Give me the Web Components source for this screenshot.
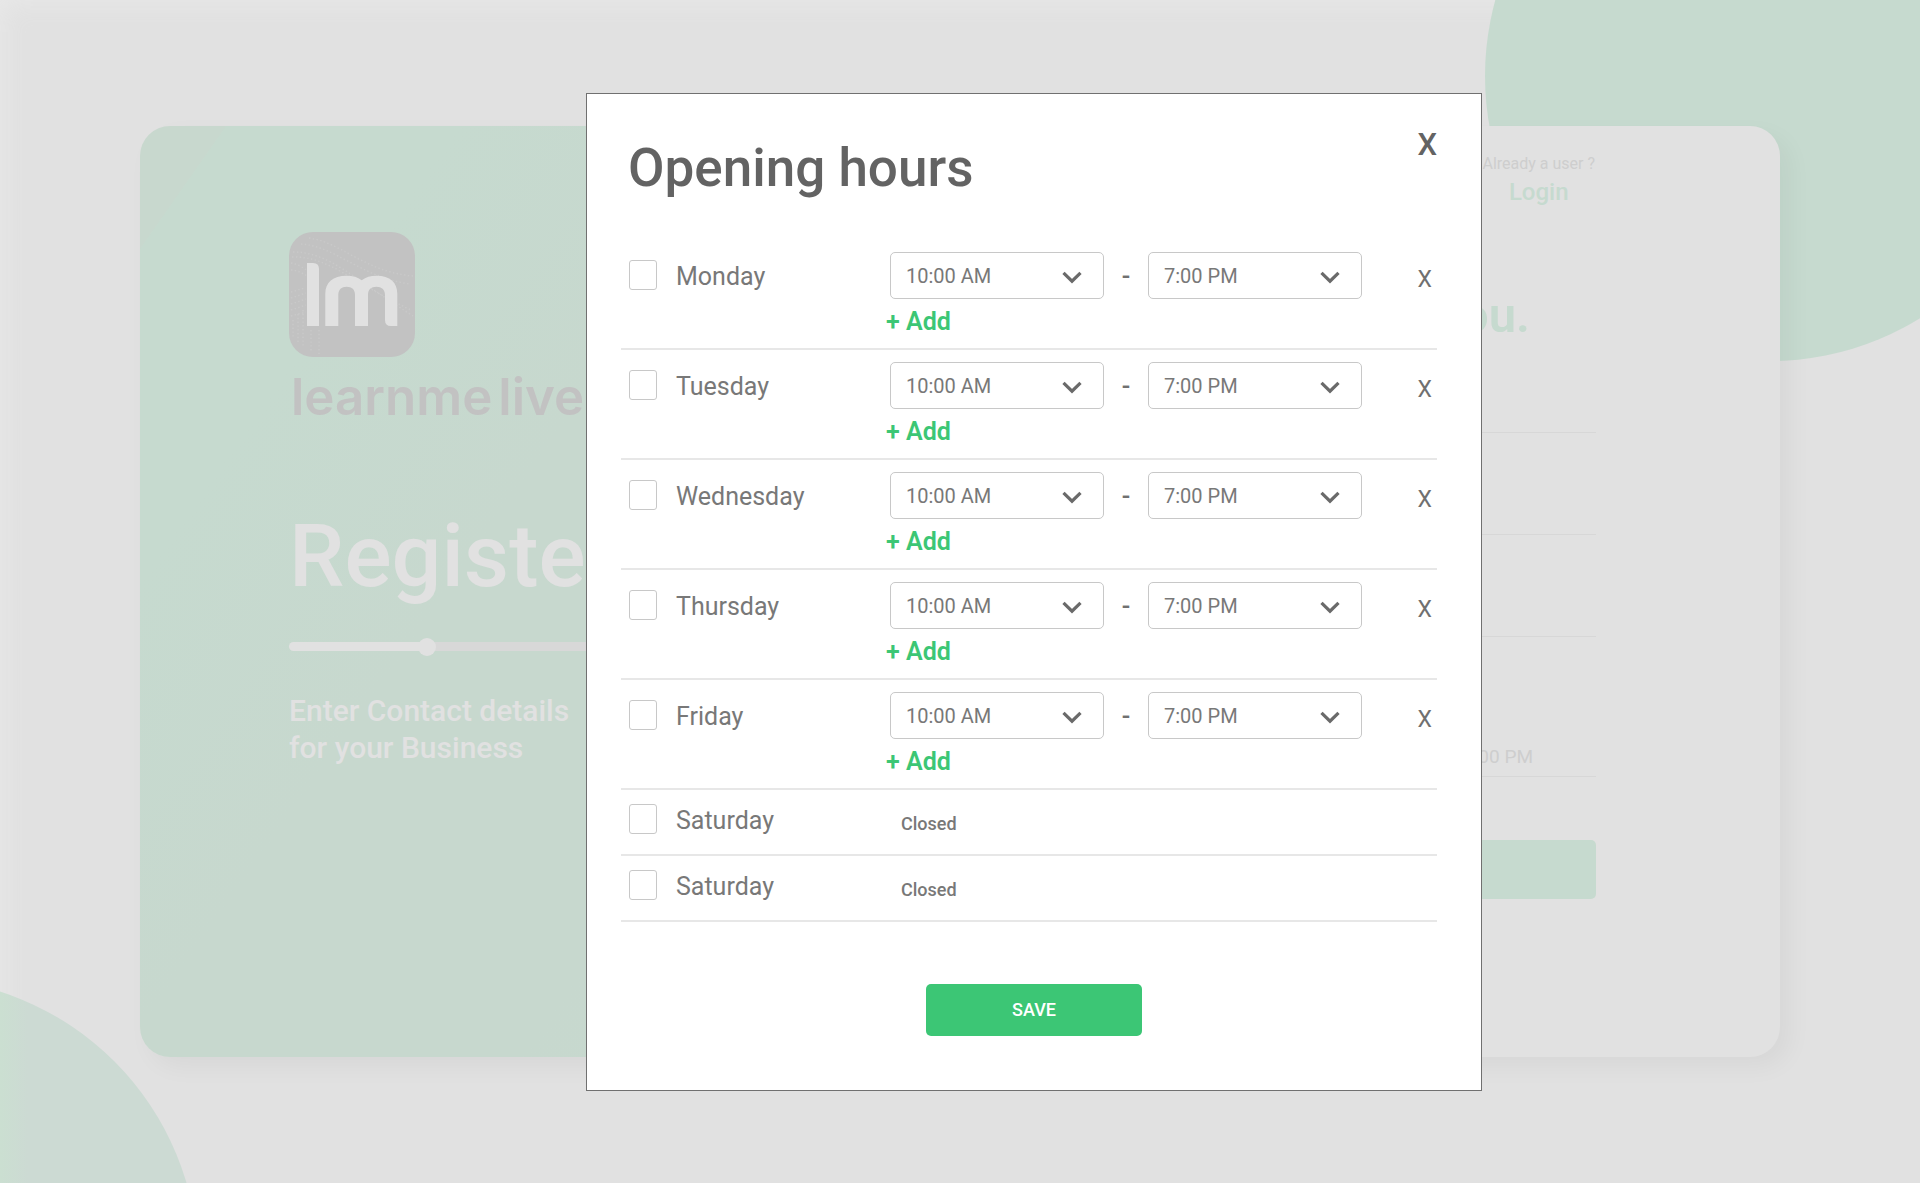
<!DOCTYPE html>
<html lang="en">
<head>
<meta charset="utf-8">
<title>Opening hours</title>
<style>
  body { margin: 0; font-family: Roboto, "Liberation Sans", sans-serif; background: #e0e0e0; }
</style>
</head>
<body>
<app-shell>
  <register-card></register-card>
  <hours-dialog slot="dialog" heading="Opening hours">
    <day-row day="Monday" open></day-row>
    <day-row day="Tuesday" open></day-row>
    <day-row day="Wednesday" open></day-row>
    <day-row day="Thursday" open></day-row>
    <day-row day="Friday" open></day-row>
    <day-row day="Saturday"></day-row>
    <day-row day="Saturday"></day-row>
  </hours-dialog>
</app-shell>

<script>
const base = `:host, *, *::before, *::after { box-sizing: border-box; }
  button, input, select { font: inherit; color: inherit; margin: 0; }
  h1, h2, p { margin: 0; }`;

function define(name, render) {
  customElements.define(name, class extends HTMLElement {
    connectedCallback() {
      if (this.shadowRoot) return;
      this.attachShadow({ mode: 'open' }).innerHTML = render(this);
    }
  });
}

define('app-shell', () => `
<style>${base}
  :host { display: block; position: relative; min-height: 100vh; overflow: hidden; background: #e1e1e1;
    box-shadow: inset 14px 14px 24px -10px #e8e8e8; }
  .blob { position: absolute; width: 570px; height: 570px; border-radius: 50%; }
  .top { right: -135px; top: -209px; background: #c6dacf; }
  .bottom { left: -372px; bottom: -365px; background: linear-gradient(to right, #cbdfd1 372px, #ccdad3 400px); }
  main { position: relative; padding: 126px 140px; }
  .overlay { position: absolute; inset: 0; display: grid; align-items: start;
    grid-template-columns: 586fr 896px 438fr; padding-top: 93px; }
  slot[name=dialog]::slotted(*) { grid-column: 2; }
</style>
<div class="blob top"></div><div class="blob bottom"></div>
<main><slot></slot></main>
<div class="overlay"><slot name="dialog"></slot></div>`);

define('brand-mark', () => `
<style>:host { display: block; } svg { display: block; }</style>
<svg width="126" height="125" viewBox="0 0 126 125" role="img" aria-label="lm">
  <rect width="126" height="125" rx="24" fill="#c2c2c2"/>
  <g fill="none" stroke="#c9c9c9" stroke-width="1.4" stroke-dasharray="1.4 2.4">
    <path d="M4 20C40 20 64 46 124 84"/><path d="M3 25C40 24 62 50 122 78"/><path d="M12 12C46 14 70 44 120 52"/>
    <path d="M20 6C52 10 76 40 124 44"/><path d="M2 31C12 32 20 42 30 44"/><path d="M2 38C10 38 18 44 28 50"/>
    <path d="M2 60L16 56"/><path d="M2 66L17 61"/><path d="M2 72L17 67"/><path d="M2 78L17 73"/><path d="M2 84L17 80"/>
    <path d="M4 88V106"/><path d="M9 82V112"/><path d="M14 78V116"/><path d="M22 98V120"/><path d="M30 98V122"/>
  </g>
  <path d="M18 31h6q6 0 6 6v57H18z" fill="#e1e1e1"/>
  <path d="M36.300 94V62C36.300 50 44 43.700 57.500 43.700C64 43.700 68.500 45 72.700 48.200C77 45 81.500 43.700 87.500 43.700C101 43.700 108.300 50 108.300 62V94H102Q96 94 96 88V63C96 57.500 92.500 54.700 87.500 54.700C82 54.700 79 57.500 79 63V94H66V63C66 57.500 63 54.700 57.500 54.700C52.500 54.700 49.300 57.500 49.300 63V94Z" fill="#e1e1e1"/>
</svg>`);

define('register-card', () => `
<style>${base}
  :host { display: grid; grid-template-columns: 1fr 1fr; border-radius: 30px; overflow: hidden;
    background: #e1e1e1; box-shadow: 10px 10px 24px rgba(0,0,0,.045); min-height: 931px; }
  .intro { padding: 106px 0 0 149px; color: #e1e1e1;
    background: linear-gradient(125deg, #c8d8ce 70px, #c6dacf 71px, #c6dacf 260px, #c7d8ce 520px, #c7d8ce 70%, #c6dacf); }
  .word { display: flex; gap: 6px; font: 600 51px/64px Inter, sans-serif; color: #c2c2c2; margin-top: 8px; padding-left: 2px; }
  h1 { font-size: 88px; line-height: 104px; font-weight: 500; margin-top: 75px; }
  .intro p { font-size: 30px; line-height: 37px; font-weight: 500; margin-top: 37px; }
  input[type=range] { display: block; appearance: none; width: 408px; height: 18px; margin-top: 29px; background: none; }
  input[type=range]::-webkit-slider-runnable-track { height: 9px; border-radius: 5px;
    background: linear-gradient(to right, #e1e1e1 34%, #d8d8d8 34%); }
  input[type=range]::-webkit-slider-thumb { appearance: none; width: 18px; height: 18px; margin-top: -4px;
    border-radius: 50%; background: #e1e1e1; }
  form { display: flex; flex-direction: column; padding: 28px 184px 0; color: #cecece; }
  .login { align-self: flex-end; text-align: center; font-size: 16px; line-height: 20px; padding-right: 1px; }
  .login a { display: block; margin-top: 4px; font-size: 24px; line-height: 28px; font-weight: 500; color: #c6dacf; text-decoration: none; }
  h2 { margin-top: 82px; padding-right: 66px; text-align: right; font-size: 49px; line-height: 56px; font-weight: 600; color: #c6dacf; }
  input[type=text] { width: 100%; height: 40px; border: 0; border-bottom: 1px solid #d7d7d7; background: none; padding: 0;
    font-size: 19px; margin-top: 62px; }
  h2 + input[type=text] { margin-top: 49px; }
  input.hours { margin-top: 100px; padding-right: 63px; text-align: right; }
  .next { margin-top: 63px; height: 59px; border: 0; border-radius: 5px; background: #c6dacf; }
</style>
<section class="intro">
  <brand-mark></brand-mark>
  <div class="word"><span>learnme</span><span>live</span></div>
  <h1>Register</h1>
  <input type="range" min="0" max="100" value="33" aria-label="Registration progress">
  <p>Enter Contact details<br>for your Business</p>
</section>
<form>
  <div class="login">Already a user ?<a href="#login">Login</a></div>
  <h2>you.</h2>
  <input type="text" aria-label="Name">
  <input type="text" aria-label="Email">
  <input type="text" aria-label="Phone">
  <input type="text" class="hours" value="7:00 PM" aria-label="Opening hours">
  <button type="button" class="next" aria-label="Continue"></button>
</form>`);

define('hours-dialog', el => `
<style>${base}
  :host { display: block; }
  section { background: #fff; border: 1px solid #707070; padding: 32px 44px 54px 34px; color: #636363; }
  header { display: flex; justify-content: space-between; align-items: flex-start; margin-bottom: 41px; }
  h2 { font-size: 53px; line-height: 62px; font-weight: 500; padding: 11px 0 0 7px; }
  .close { border: 0; background: none; padding: 0; font-size: 31px; line-height: 38px; font-weight: 500; }
  footer { display: flex; justify-content: center; margin-top: 62px; padding-left: 10px; }
  .save { width: 216px; height: 52px; border: 0; border-radius: 5px; background: #3cc675; color: #fff;
    padding: 0 0 2px; font-size: 18px; font-weight: 500; }
</style>
<section role="dialog" aria-labelledby="title">
  <header><h2 id="title">${el.getAttribute('heading')}</h2><button class="close" aria-label="Close">X</button></header>
  <slot></slot>
  <footer><button class="save">SAVE</button></footer>
</section>`);

define('day-row', el => {
  const open = el.hasAttribute('open');
  return `
<style>${base}
  :host { display: grid; grid-template-columns: 265px 1fr auto; align-items: start; min-height: 66px;
    padding: 14px 5px 0 0; border-bottom: 2px solid #e7e7e7; color: #787878; }
  :host([open]) { min-height: 110px; padding-top: 12px; }
  label { display: flex; gap: 19px; padding-left: 8px; font-size: 25px; line-height: 34px; }
  :host([open]) label { padding-top: 8px; }
  input { appearance: none; width: 28px; height: 30px; border: 1px solid #c8c8c8; border-radius: 3px; background: #fff; }
  .range { display: flex; align-items: center; padding-left: 4px; }
  .dash { width: 44px; padding-top: 3px; text-align: center; font-size: 25px; line-height: 30px; font-weight: 500; color: #707070; }
  .add { display: block; border: 0; background: none; padding: 0; margin-top: 8px; font-size: 25px; line-height: 30px;
    font-weight: 600; color: #3cc675; }
  .remove { border: 0; background: none; padding: 0; font-size: 23px; line-height: 56px; color: #707070; }
  .closed { padding-left: 15px; font-size: 18px; line-height: 40px; font-weight: 500; }
</style>
<label><input type="checkbox"><span>${el.getAttribute('day')}</span></label>
${open ? `<div>
  <div class="range"><time-select value="10:00 AM" label="Opens"></time-select><span class="dash">-</span><time-select value="7:00 PM" label="Closes"></time-select></div>
  <button class="add">+ Add</button>
</div>
<button class="remove" aria-label="Remove hours">X</button>` : `<div class="closed">Closed</div>`}`;
});

define('time-select', el => `
<style>${base}
  :host { display: grid; width: 214px; height: 47px; color: #787878; }
  select, svg { grid-area: 1 / 1; }
  select { appearance: none; width: 100%; height: 100%; border: 1px solid #c8c8c8; border-radius: 5px; background: #fff;
    padding: 0 48px 0 15px; font-size: 20px; }
  svg { justify-self: end; align-self: center; margin: 3px 22px 0 0; pointer-events: none; }
</style>
<select aria-label="${el.getAttribute('label')}"><option>${el.getAttribute('value')}</option></select>
<svg width="20" height="13" viewBox="0 0 20 13"><path d="M1.500 1.800L10 10.200L18.500 1.800" fill="none" stroke="#6a6a6a" stroke-width="3.200"/></svg>`);
</script>
</body>
</html>
